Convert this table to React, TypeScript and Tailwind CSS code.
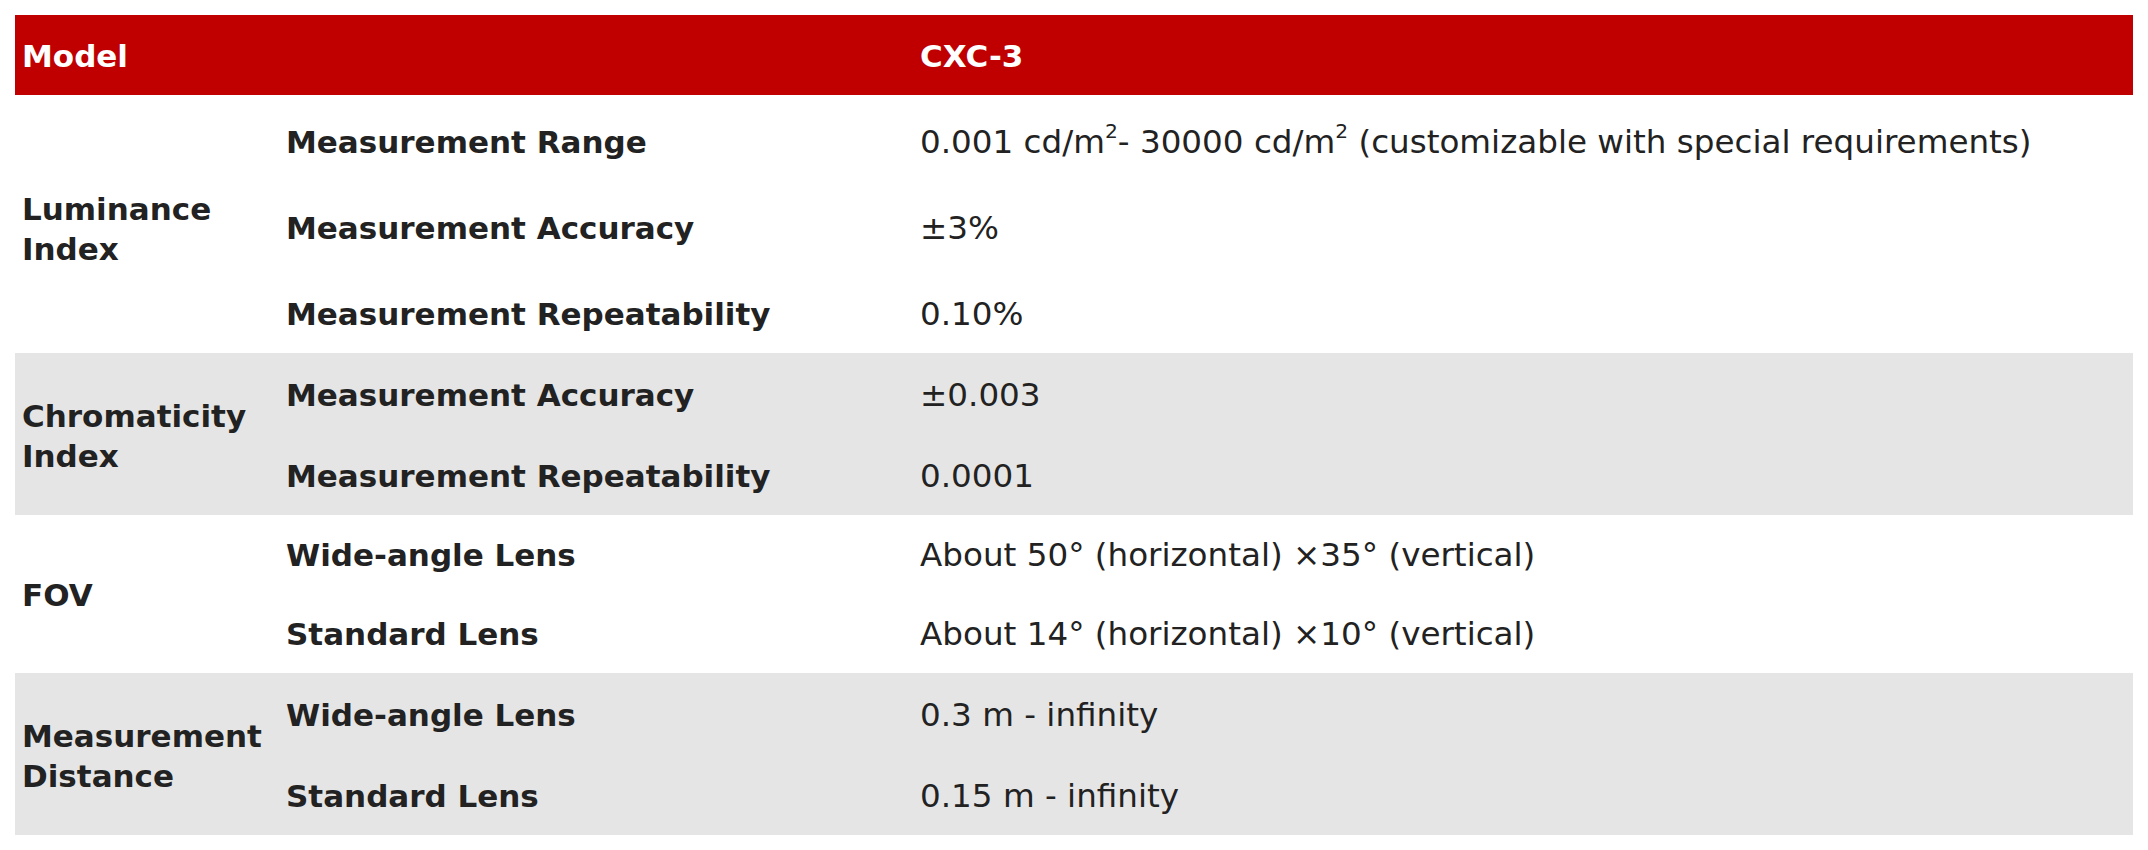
type Row = { label: string; value: React.ReactNode };
type Group = { title: string[]; rows: Row[]; shade: boolean; rowClass: string; pad: string };

const groups: Group[] = [
  {
    title: ["Luminance", "Index"],
    shade: false,
    rowClass: "h-[86px]",
    pad: "pt-[9px]",
    rows: [
      {
        label: "Measurement Range",
        value: (
          <>
            0.001 cd/m<sup className="text-[0.62em] top-[-0.75em]">2</sup>- 30000 cd/m
            <sup className="text-[0.62em] top-[-0.75em]">2</sup> (customizable with special requirements)
          </>
        ),
      },
      { label: "Measurement Accuracy", value: "±3%" },
      { label: "Measurement Repeatability", value: "0.10%" },
    ],
  },
  {
    title: ["Chromaticity", "Index"],
    shade: true,
    rowClass: "h-[81px]",
    pad: "pt-[3px]",
    rows: [
      { label: "Measurement Accuracy", value: "±0.003" },
      { label: "Measurement Repeatability", value: "0.0001" },
    ],
  },
  {
    title: ["FOV"],
    shade: false,
    rowClass: "h-[79px]",
    pad: "pt-[1px]",
    rows: [
      { label: "Wide-angle Lens", value: "About 50° (horizontal) ×35° (vertical)" },
      { label: "Standard Lens", value: "About 14° (horizontal) ×10° (vertical)" },
    ],
  },
  {
    title: ["Measurement", "Distance"],
    shade: true,
    rowClass: "h-[81px]",
    pad: "pt-[3px]",
    rows: [
      { label: "Wide-angle Lens", value: "0.3 m - infinity" },
      { label: "Standard Lens", value: "0.15 m - infinity" },
    ],
  },
];

export default function App() {
  return (
    <div className="min-h-[850px] bg-white pt-[15px] pl-[15px] font-['DejaVu_Sans',Verdana,sans-serif] text-[#222]">
      <table className="w-[2118px] border-collapse table-fixed">
        <colgroup>
          <col className="w-[264px]" />
          <col className="w-[634px]" />
          <col />
        </colgroup>
        <thead>
          <tr className="h-[80px] bg-[#c00000] text-white">
            <th colSpan={2} className="px-[7px] pt-[2px] text-left align-middle text-[31px] font-bold">
              Model
            </th>
            <th className="px-[7px] pt-[2px] text-left align-middle text-[31px] font-bold">CXC-3</th>
          </tr>
        </thead>
        <tbody>
          {groups.map((g) =>
            g.rows.map((r, i) => (
              <tr key={g.title.join() + i} className={`${g.rowClass} ${g.shade ? "bg-[#e5e5e5]" : "bg-white"}`}>
                {i === 0 && (
                  <th
                    rowSpan={g.rows.length}
                    className={`px-[7px] ${g.pad} text-left align-middle text-[31px] leading-[40px] font-bold`}
                  >
                    {g.title.map((t) => (
                      <div key={t}>{t}</div>
                    ))}
                  </th>
                )}
                <td className={`px-[7px] ${g.pad} align-middle text-[31px] font-bold`}>{r.label}</td>
                <td className={`px-[7px] ${g.pad} align-middle text-[32.6px]`}>{r.value}</td>
              </tr>
            ))
          )}
        </tbody>
      </table>
    </div>
  );
}
